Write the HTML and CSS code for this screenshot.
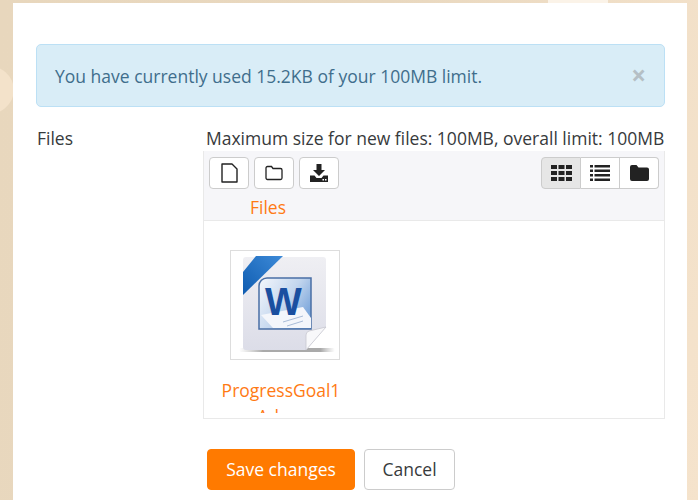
FILE: index.html
```html
<!DOCTYPE html>
<html lang="en">
	<head>
		<meta charset="UTF-8" />
		<meta name="viewport" content="width=device-width, initial-scale=1.0" />
		<title>Files</title>
		<link rel="stylesheet" href="styles.css">
	</head>
	<body>
		<div class="blob"></div>
		<div class="glow"></div>
		<div class="card">
			<div class="alert">
				<span>You have currently used 15.2KB of your 100MB limit.</span>
				<span class="alert-close">×</span>
			</div>

			<div class="form-row">
				<div class="form-label">Files</div>
				<div class="form-field">
					<div class="limits">Maximum size for new files: 100MB, overall limit: 100MB</div>
					<div class="manager">
						<div class="manager-head">
							<div class="toolbar">
								<div class="actions">
									<button class="tool" type="button">
										<svg width="17" height="20" viewBox="0 0 17 20"><path d="M1 1h10l5 5v13H1z" fill="#fff" stroke="#222" stroke-width="1.400" stroke-linejoin="round"/></svg>
									</button>
									<button class="tool" type="button">
										<svg width="18" height="16" viewBox="0 0 18 16"><path d="M1 3a1.500 1.500 0 0 1 1.500-1.500h4l1.500 2h7.500A1.500 1.500 0 0 1 17 5v8a1.500 1.500 0 0 1-1.500 1.500h-13A1.500 1.500 0 0 1 1 13z" fill="#fff" stroke="#222" stroke-width="1.300"/></svg>
									</button>
									<button class="tool" type="button">
										<svg width="18" height="18" viewBox="0 0 18 18"><path d="M6.500 0h5v6h3.500l-6 6-6-6h3.500z" fill="#222"/><path d="M0 11.500h4.500l2 2.500h5l2-2.500H18V18H0z" fill="#222"/><rect x="12.500" y="15" width="1.500" height="1.500" fill="#fff"/><rect x="15" y="15" width="1.500" height="1.500" fill="#fff"/></svg>
									</button>
								</div>
								<div class="views">
									<button class="view active" type="button">
										<svg width="21" height="16" viewBox="0 0 21 16" fill="#222"><rect x="0" y="0" width="6" height="4"/><rect x="7.500" y="0" width="6" height="4"/><rect x="15" y="0" width="6" height="4"/><rect x="0" y="6" width="6" height="4"/><rect x="7.500" y="6" width="6" height="4"/><rect x="15" y="6" width="6" height="4"/><rect x="0" y="12" width="6" height="4"/><rect x="7.500" y="12" width="6" height="4"/><rect x="15" y="12" width="6" height="4"/></svg>
									</button>
									<button class="view" type="button">
										<svg width="20" height="16" viewBox="0 0 20 16" fill="#222"><rect x="0" y="0" width="3" height="2.500"/><rect x="4.500" y="0" width="15.500" height="2.500"/><rect x="0" y="4.500" width="3" height="2.500"/><rect x="4.500" y="4.500" width="15.500" height="2.500"/><rect x="0" y="9" width="3" height="2.500"/><rect x="4.500" y="9" width="15.500" height="2.500"/><rect x="0" y="13.500" width="3" height="2.500"/><rect x="4.500" y="13.500" width="15.500" height="2.500"/></svg>
									</button>
									<button class="view" type="button">
										<svg width="19" height="16" viewBox="0 0 19 16"><path d="M0 2a2 2 0 0 1 2-2h4.500l2 2.500H17a2 2 0 0 1 2 2V14a2 2 0 0 1-2 2H2a2 2 0 0 1-2-2z" fill="#222"/></svg>
									</button>
								</div>
							</div>
							<a class="crumb" href="#">Files</a>
						</div>
						<div class="manager-body">
							<div class="file">
								<div class="thumb">
									<svg width="108" height="108" viewBox="0 0 108 108">
										<defs>
											<linearGradient id="sheet" x1="0" y1="0" x2="0" y2="1">
												<stop offset="0" stop-color="#efeff3"/>
												<stop offset="1" stop-color="#dcdde8"/>
											</linearGradient>
											<linearGradient id="ribbon" x1="0" y1="1" x2="1" y2="0">
												<stop offset="0" stop-color="#0f5cb0"/>
												<stop offset="1" stop-color="#3d8ad8"/>
											</linearGradient>
											<linearGradient id="tile" x1="0" y1="0" x2="1" y2="0.600">
												<stop offset="0" stop-color="#f4f7fc"/>
												<stop offset="0.600" stop-color="#c3d6ee"/>
												<stop offset="1" stop-color="#7ea8dc"/>
											</linearGradient>
											<linearGradient id="shade" x1="0" y1="0" x2="1" y2="0">
												<stop offset="0" stop-color="#bbb" stop-opacity="0"/>
												<stop offset="0.250" stop-color="#aaa"/>
												<stop offset="0.850" stop-color="#aaa"/>
												<stop offset="1" stop-color="#bbb" stop-opacity="0"/>
											</linearGradient>
										</defs>
										<rect x="8" y="97" width="96" height="4" rx="2" fill="url(#shade)"/>
										<path d="M12 9a3 3 0 0 1 3-3h77a3 3 0 0 1 3 3v67L75 99H15a3 3 0 0 1-3-3z" fill="url(#sheet)"/>
										<path d="M75 99V84q0-3 3-4l17-4z" fill="#f8f8fa" stroke="#c6c7cf" stroke-width="0.800"/>
										<path d="M25 5h27L12 44V21z" fill="url(#ribbon)"/>
										<path d="M36 27h44v51H28V35a8 8 0 0 1 8-8z" fill="url(#tile)" stroke="#4a6fa5" stroke-width="1.500"/>
										<path d="M30 64l42-8 8 11v10H42z" fill="#f4f6fb"/>
										<path d="M52 71l20-6M56 75l16-5" stroke="#a9bcd8" stroke-width="1"/>
										<text class="word-letter" x="34" y="64">W</text>
									</svg>
								</div>
								<a class="file-name" href="#">ProgressGoal1 Adam</a>
							</div>
						</div>
					</div>
				</div>
			</div>

			<div class="buttons">
				<button class="btn btn-save" type="submit">Save changes</button>
				<button class="btn btn-cancel" type="button">Cancel</button>
			</div>
		</div>
	</body>
</html>
```

FILE: styles.css
```css
html,
body {
	height: 100%;
}

body {
	margin: 0;
	overflow: hidden;
	background: linear-gradient(100deg, #e8d7bd 0%, #e9d8bf 50%, #f5e3cc 100%);
	font-family: "Open Sans", sans-serif;
	font-size: 17.5px;
	color: #373a3c;
}

.blob {
	position: absolute;
	top: 65px;
	left: -44px;
	width: 58px;
	height: 50px;
	border-radius: 50%;
	background-color: #f3e2ca;
}

.glow {
	position: absolute;
	top: 0;
	left: 548px;
	width: 60px;
	height: 3px;
	background-color: #fbf3e8;
}

.card {
	position: relative;
	margin: 3px 11px 0 13px;
	padding: 41px 22px 0 23px;
	height: 497px;
	box-sizing: border-box;
	background-color: #ffffff;
}

.alert {
	display: flex;
	justify-content: space-between;
	align-items: center;
	height: 63px;
	padding: 0 18px;
	box-sizing: border-box;
	background-color: #d9edf7;
	border: 1px solid #bce0f5;
	border-radius: 5px;
	color: #3f6e8c;
}

.alert-close {
	padding-bottom: 2px;
	font-size: 26px;
	font-weight: 700;
	line-height: 1;
	color: #b5bfc5;
}

.form-row {
	display: flex;
	margin-top: 18px;
}

.form-label {
	width: 169px;
	padding-left: 1px;
	line-height: 26px;
	color: #373a3c;
}

.form-field {
	width: 459px;
}

.limits {
	line-height: 26px;
	white-space: nowrap;
	color: #373a3c;
}

.manager {
	border: 1px solid #e9e9e9;
	border-top: 0;
	width: 462px;
	margin-left: -3px;
	box-sizing: border-box;
}

.manager-head {
	height: 70px;
	padding: 6px 5px 0;
	box-sizing: border-box;
	background-color: #f6f6f9;
	border-bottom: 1px solid #e9e9e9;
}

.toolbar {
	display: flex;
	justify-content: space-between;
}

.actions {
	display: flex;
	gap: 5px;
}

.tool {
	display: flex;
	align-items: center;
	justify-content: center;
	width: 40px;
	height: 32px;
	padding: 0;
	background-color: #ffffff;
	border: 1px solid #cccccc;
	border-radius: 4px;
}

.views {
	display: flex;
}

.view {
	display: flex;
	align-items: center;
	justify-content: center;
	width: 39px;
	height: 32px;
	padding: 0;
	background-color: #ffffff;
	border: 1px solid #cccccc;
	border-left: 0;
}

.view:first-child {
	border-left: 1px solid #cccccc;
	border-radius: 4px 0 0 4px;
	width: 40px;
}

.view:last-child {
	border-radius: 0 4px 4px 0;
}

.view.active {
	background-color: #e6e6e6;
}

.crumb {
	display: block;
	margin: 5px 0 0 41px;
	line-height: 26px;
	color: #ff7a14;
	text-decoration: none;
}

.manager-body {
	height: 197px;
	padding: 29px 0 0 17px;
	box-sizing: border-box;
	overflow: hidden;
}

.file {
	width: 120px;
}

.thumb {
	width: 110px;
	height: 110px;
	margin-left: 9px;
	box-sizing: border-box;
	border: 1px solid #dddddd;
}

.thumb svg {
	display: block;
}

.word-letter {
	font-family: "Liberation Sans", sans-serif;
	font-size: 39px;
	font-weight: 700;
	fill: #1a4fa0;
}

.file-name {
	display: block;
	max-height: 36px;
	margin-top: 17px;
	overflow: hidden;
	line-height: 26.4px;
	text-align: center;
	color: #ff7a14;
	text-decoration: none;
}

.buttons {
	display: flex;
	gap: 9px;
	margin: 30px 0 0 171px;
}

.btn {
	height: 41px;
	padding: 0 0 2px;
	font-family: "Open Sans", sans-serif;
	font-size: 17.5px;
	border-radius: 4px;
	box-sizing: border-box;
}

.btn-save {
	width: 148px;
	background-color: #ff7a00;
	border: 1px solid #ff7a00;
	color: #ffffff;
}

.btn-cancel {
	width: 91px;
	background-color: #ffffff;
	border: 1px solid #cccccc;
	color: #373a3c;
}
```
